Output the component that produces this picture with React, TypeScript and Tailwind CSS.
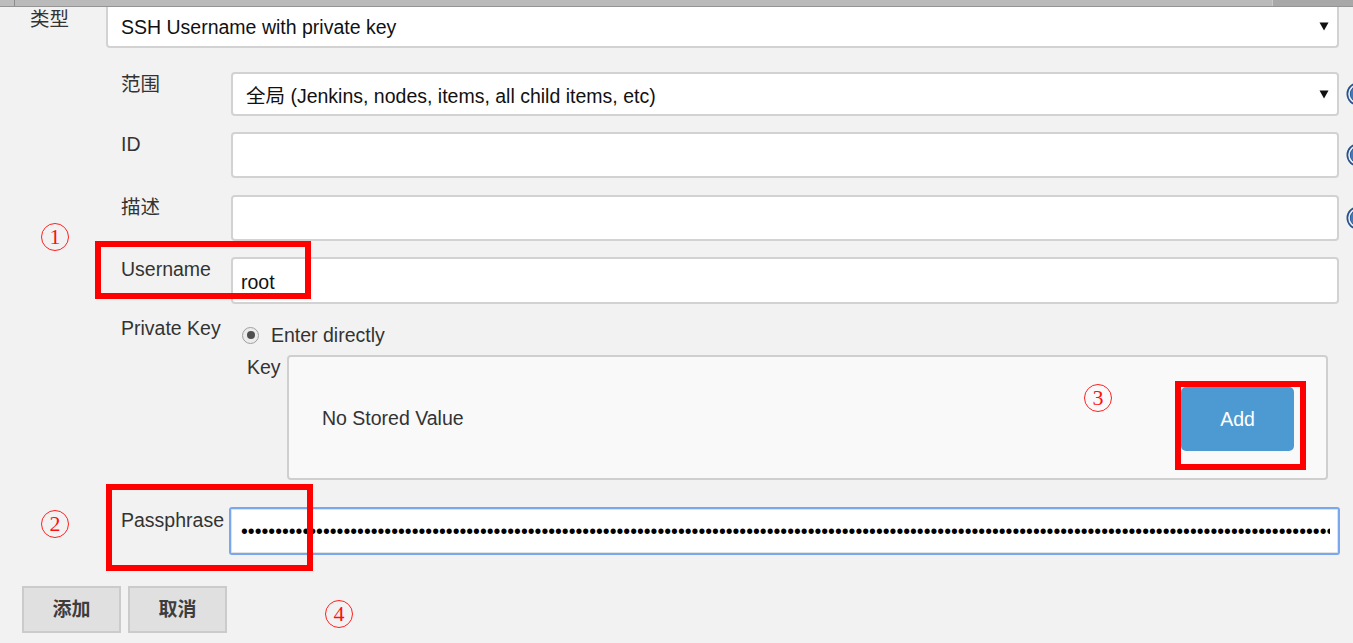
import React from "react";

function Arrow() {
  return (
    <svg width="10" height="9" viewBox="0 0 10 9" className="shrink-0">
      <polygon points="0.5,0.5 9.5,0.5 5,8.5" fill="#111" />
    </svg>
  );
}

function Help() {
  return (
    <svg width="24" height="24" viewBox="0 0 24 24" className="shrink-0 ml-[7px]">
      <circle cx="12" cy="12" r="11.5" fill="#27528c" />
      <circle cx="12" cy="12" r="9" fill="none" stroke="#e8eef8" strokeWidth="1.6" />
      <circle cx="12" cy="12" r="7.5" fill="#4677b8" />
    </svg>
  );
}

function Mark({ n, cls }: { n: string; cls: string }) {
  return (
    <div
      className={
        "absolute w-[28px] h-[28px] rounded-full border border-[#ff2020] flex items-center justify-center text-[#ff1010] text-[22px] leading-none font-['Liberation_Serif',serif] " +
        cls
      }
    >
      {n}
    </div>
  );
}

export default function App() {
  const dots = "•".repeat(160);
  return (
    <div className="relative w-[1353px] h-[643px] overflow-hidden bg-[#f2f2f2] font-['Liberation_Sans','Noto_Sans_CJK_SC',Arial,sans-serif] text-[19.5px] leading-[24px] text-[#333]">
      {/* top bar */}
      <div className="flex h-[7px] border-b border-[#949494]">
        <div className="w-[14px] bg-[#bdbdbd]" />
        <div className="w-[1px] bg-[#8c8c8c]" />
        <div className="flex-1 bg-[#bababa]" />
        <div className="w-[1px] bg-[#c8c8c8]" />
        <div className="w-[80px] bg-[#a8a8a8]" />
      </div>

      {/* 类型 row */}
      <div className="flex">
        <div className="w-[106px] shrink-0 pl-[30px]">类型</div>
        <div className="w-[1233px] shrink-0 h-[41px] bg-white border-2 border-t-0 border-[#d2d2d2] rounded-b-[4px] flex items-center pl-[13px] pr-[8px] text-[#111]">
          <span className="flex-1">SSH Username with private key</span>
          <Arrow />
        </div>
      </div>

      {/* nested section */}
      <div className="pl-[121px]">
        {/* 范围 */}
        <div className="flex items-center mt-[24px]">
          <div className="w-[110px] shrink-0 self-start">范围</div>
          <div className="w-[1108px] shrink-0 h-[44px] bg-white border-2 border-[#d2d2d2] rounded-[4px] flex items-center pl-[13px] pr-[8px] text-[#111]">
            <span className="flex-1 pt-[3px]">全局 (Jenkins, nodes, items, all child items, etc)</span>
            <Arrow />
          </div>
          <Help />
        </div>

        {/* ID */}
        <div className="flex items-center mt-[16px]">
          <div className="w-[110px] shrink-0 self-start">ID</div>
          <div className="w-[1108px] shrink-0 h-[46px] bg-white border-2 border-[#d2d2d2] rounded-[4px]" />
          <Help />
        </div>

        {/* 描述 */}
        <div className="flex items-center mt-[17px]">
          <div className="w-[110px] shrink-0 self-start">描述</div>
          <div className="w-[1108px] shrink-0 h-[46px] bg-white border-2 border-[#d2d2d2] rounded-[4px]" />
          <Help />
        </div>

        {/* Username */}
        <div className="flex items-center mt-[16px]">
          <div className="w-[110px] shrink-0 self-start">Username</div>
          <div className="w-[1108px] shrink-0 h-[47px] bg-white border-2 border-[#d2d2d2] rounded-[4px] flex items-center pl-[8px] pt-[3px] text-[#111]">
            root
          </div>
        </div>

        {/* Private Key */}
        <div className="flex mt-[12px]">
          <div className="w-[110px] shrink-0">Private Key</div>
          <div className="flex flex-col">
            <div className="flex items-center mt-[7px] pl-[11px]">
              <div className="w-[17px] h-[17px] rounded-full border border-[#a0a0a0] bg-[#ececec] flex items-center justify-center">
                <div className="w-[8px] h-[8px] rounded-full bg-[#4f4f4f]" />
              </div>
              <span className="ml-[12px]">Enter directly</span>
            </div>
            <div className="flex mt-[8px] pl-[16px]">
              <div className="w-[40px] shrink-0">Key</div>
              <div className="w-[1041px] shrink-0 h-[125px] bg-[#f9f9f9] border-2 border-[#cfcfcf] rounded-[4px] flex items-center pl-[33px] pr-[32px]">
                <span className="flex-1">No Stored Value</span>
                <div className="w-[113px] h-[64px] rounded-[5px] bg-[#4d9ad2] text-white flex items-center justify-center mt-[2px]">
                  Add
                </div>
              </div>
            </div>
          </div>
        </div>

        {/* Passphrase */}
        <div className="flex mt-[27px]">
          <div className="w-[108px] shrink-0 pt-[1px]">Passphrase</div>
          <div className="w-[1111px] shrink-0 h-[48px] bg-white border-2 border-[#7ba7ec] rounded-[3px] shadow-[inset_0_0_0_1px_#e2e2e2] flex items-center pl-[10px] pr-[8px] overflow-hidden">
            <div className="whitespace-nowrap overflow-hidden text-black">{dots}</div>
          </div>
        </div>
      </div>

      {/* buttons */}
      <div className="flex gap-[7px] pl-[22px] mt-[31px]">
        <div className="w-[99px] h-[47px] bg-[#e0e0e0] border-2 border-[#cbcbcb] flex items-center justify-center font-bold text-[19px] text-[#3d3d3d]">
          添加
        </div>
        <div className="w-[99px] h-[47px] bg-[#e0e0e0] border-2 border-[#cbcbcb] flex items-center justify-center font-bold text-[19px] text-[#3d3d3d]">
          取消
        </div>
      </div>

      {/* annotations */}
      <div className="absolute left-[95px] top-[241px] w-[216px] h-[58px] border-[6px] border-[#ff0000]" />
      <div className="absolute left-[106px] top-[484px] w-[207px] h-[87px] border-[6px] border-[#ff0000]" />
      <div className="absolute left-[1175px] top-[381px] w-[131px] h-[89px] border-[6px] border-[#ff0000]" />
      <Mark n="1" cls="left-[41px] top-[223px]" />
      <Mark n="2" cls="left-[41px] top-[510px]" />
      <Mark n="3" cls="left-[1084px] top-[384px]" />
      <Mark n="4" cls="left-[325px] top-[600px]" />
    </div>
  );
}
